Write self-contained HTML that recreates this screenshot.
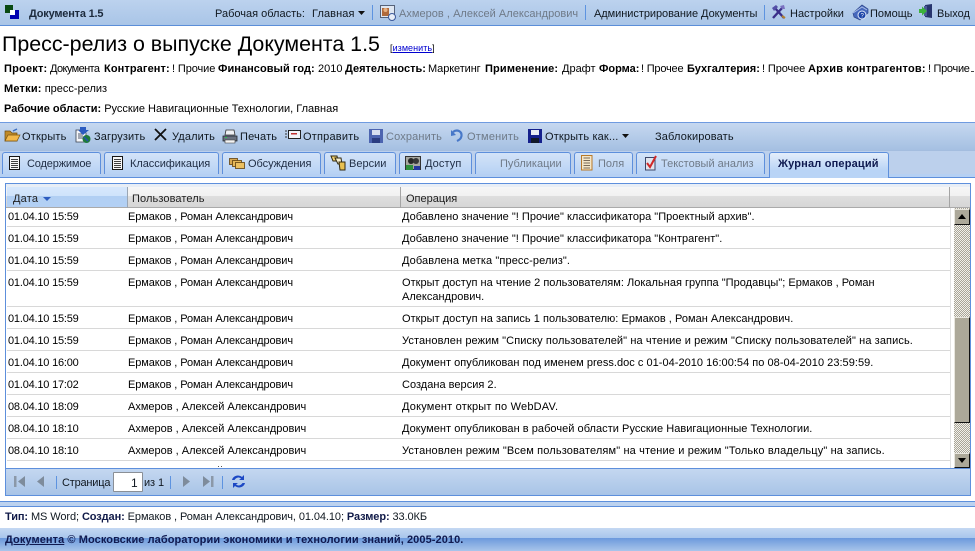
<!DOCTYPE html>
<html lang="ru"><head><meta charset="utf-8"><title>Документа</title>
<style>
html,body{margin:0;padding:0;background:#fff}
#p{position:relative;width:975px;height:551px;overflow:hidden;background:#fff;font:11px/13px "Liberation Sans",sans-serif;color:#000}
.a{position:absolute}
.t{position:absolute;white-space:nowrap;line-height:13px}
svg{position:absolute;overflow:visible}
.tab{position:absolute;top:152px;height:22px;box-sizing:border-box;border:1px solid #5d8fdc;border-bottom:none;border-radius:3px 3px 0 0;background:linear-gradient(#d3e3f8,#b7d2f4)}
.g{color:#6f7a88}
.tabt{color:#1f2d44}
.sep{position:absolute;width:1px;background:#5d93e0}
.hl{position:absolute;left:7px;width:943px;height:1px;background:#d8d8d8}
.d{left:8px;letter-spacing:-.2px}
.e{left:128px;letter-spacing:-.1px}
.h{left:128px}
.o{left:402px;letter-spacing:.02px}
.m{top:63px}
</style></head><body><div id="p">

<!-- top header -->
<div class="a" style="left:0;top:0;width:975px;height:25px;background:linear-gradient(#bcd2ee,#a9c5e7)"></div>
<div class="a" style="left:0;top:25px;width:975px;height:1px;background:#5b8ed8"></div>
<svg style="left:5px;top:5px" width="15" height="15"><rect x="0" y="0" width="8" height="8" fill="#0a4a12"/><rect x="5" y="5" width="9" height="9" fill="#0000b0"/><rect x="5" y="5" width="5" height="5" fill="#fff"/></svg>
<div class="t" style="left:29px;top:8px;font-weight:bold;color:#1c2a3c;letter-spacing:-.2px">Документа 1.5</div>
<div class="t" style="left:215px;top:8px;color:#101820">Рабочая область:</div>
<div class="t" style="left:312px;top:8px;color:#101820;letter-spacing:.1px">Главная</div>
<svg style="left:358px;top:11px" width="7" height="4"><path d="M0 0H7L3.5 4Z" fill="#111"/></svg>
<div class="sep" style="left:372px;top:5px;height:15px"></div>
<svg style="left:380px;top:5px" width="17" height="16"><rect x=".5" y=".5" width="14" height="12" fill="#dfe7f2" stroke="#56627a"/><rect x="2" y="3" width="7" height="8" fill="#b06a3c"/><circle cx="5.5" cy="5" r="2" fill="#e8b080"/><circle cx="12" cy="12" r="3.5" fill="#e8eef8" stroke="#3c5a9c"/></svg>
<div class="t g" style="left:399px;top:8px;letter-spacing:.03px">Ахмеров , Алексей Александрович</div>
<div class="sep" style="left:585px;top:5px;height:15px"></div>
<div class="t" style="left:594px;top:8px;color:#101820;letter-spacing:-.05px">Администрирование Документы</div>
<div class="sep" style="left:764px;top:5px;height:15px"></div>
<svg style="left:771px;top:4px" width="15" height="16"><path d="M2 14L12 3M3 3L13 14" stroke="#3b2f8a" stroke-width="2.4"/><path d="M1 4L5 1L7 3L3 7Z" fill="#5450a8"/><path d="M9 2L13 1L14 5L11 5Z" fill="#7a70c0"/><path d="M11 12L14 14" stroke="#b08030" stroke-width="2"/></svg>
<div class="t" style="left:790px;top:8px;color:#101820">Настройки</div>
<svg style="left:852px;top:4px" width="17" height="17"><path d="M1 9L10 1L16 5L16 9L8 16L2 13Z" fill="#4668bc" stroke="#2a4288" stroke-width=".7"/><path d="M1 9L10 3L15 6" stroke="#a8bce8" fill="none"/><circle cx="10" cy="11" r="4" fill="#1c44a8" stroke="#dfe8fa"/><text x="8.5" y="13.5" font-size="6" fill="#fff" font-family="Liberation Sans,sans-serif">?</text></svg>
<div class="t" style="left:870px;top:8px;color:#101820">Помощь</div>
<svg style="left:919px;top:4px" width="15" height="15"><path d="M6 1L13 0V14L6 13Z" fill="#27356e"/><rect x="5" y="2" width="3" height="10" fill="#4a5a98"/><path d="M0 5H3V2.5L8 7L3 11.500V9H0Z" fill="#3cb23c"/></svg>
<div class="t" style="left:937px;top:8px;color:#101820">Выход</div>

<!-- title + metadata -->
<div class="t" style="left:2px;top:31px;font-size:21.4px;line-height:26px;color:#000">Пресс-релиз о выпуске Документа 1.5</div>
<div class="t" style="left:390px;top:43px;font-size:9px;line-height:11px;letter-spacing:.05px">[<span style="color:#0000d0;text-decoration:underline">изменить</span>]</div>
<b class="t m" style="left:4px;letter-spacing:.2px">Проект:</b><span class="t m" style="left:50px;letter-spacing:-.6px">Документа</span>
<b class="t m" style="left:104px;letter-spacing:.1px">Контрагент:</b><span class="t m" style="left:172px;letter-spacing:-.1px">! Прочие</span>
<b class="t m" style="left:218px;letter-spacing:.05px">Финансовый год:</b><span class="t m" style="left:318px">2010</span>
<b class="t m" style="left:345px">Деятельность:</b><span class="t m" style="left:428px;letter-spacing:-.1px">Маркетинг</span>
<b class="t m" style="left:485px;letter-spacing:.15px">Применение:</b><span class="t m" style="left:562px">Драфт</span>
<b class="t m" style="left:599px">Форма:</b><span class="t m" style="left:641px;letter-spacing:-.2px">! Прочее</span>
<b class="t m" style="left:687px">Бухгалтерия:</b><span class="t m" style="left:762px;letter-spacing:-.1px">! Прочее</span>
<b class="t m" style="left:808px;letter-spacing:.2px">Архив контрагентов:</b><span class="t m" style="left:928px;letter-spacing:-.3px">! Прочие</span>
<div class="a" style="left:971px;top:71px;width:3px;height:1px;background:#444"></div>
<div class="t" style="left:4px;top:83px"><b style="letter-spacing:.2px">Метки:</b> пресс-релиз</div>
<div class="t" style="left:4px;top:103px"><b>Рабочие области:</b> Русские Навигационные Технологии, Главная</div>

<!-- toolbar -->
<div class="a" style="left:0;top:122px;width:975px;height:1px;background:#6f9be0"></div>
<div class="a" style="left:0;top:123px;width:975px;height:27px;background:linear-gradient(#c6d8f0,#a5c0e2)"></div>
<svg style="left:4px;top:128px" width="17" height="15"><path d="M1 13V3H6L8 5H13V13Z" fill="#c08a28" stroke="#6a4a10" stroke-width=".7"/><path d="M1 13L4 7H16L13 13Z" fill="#f2b84a" stroke="#7a5410" stroke-width=".7"/><path d="M9 3L13 1" stroke="#3c6ec0" stroke-width="1.500"/></svg>
<div class="t" style="left:22px;top:131px;color:#101820;letter-spacing:.2px">Открыть</div>
<svg style="left:75px;top:127px" width="17" height="17"><path d="M1 3H8L11 6V15H1Z" fill="#f4f6fa" stroke="#38404e" stroke-width=".8"/><path d="M3 7H8M3 9H8M3 11H8" stroke="#50586a"/><path d="M5 0H11V3H14L8 8L3 3H5Z" fill="#2c5cc0"/><circle cx="11.500" cy="12" r="4" fill="#1e7a3c"/><path d="M9 10L13 14" stroke="#2450b0" stroke-width="1.500"/></svg>
<div class="t" style="left:94px;top:131px;color:#101820;letter-spacing:.12px">Загрузить</div>
<svg style="left:154px;top:128px" width="13" height="13"><path d="M1 1L12 12M12 1L1 12" stroke="#111" stroke-width="1.800"/></svg>
<div class="t" style="left:172px;top:131px;color:#101820;letter-spacing:.15px">Удалить</div>
<svg style="left:222px;top:129px" width="16" height="15"><path d="M4 1H12L13 6H3Z" fill="#eef0f4" stroke="#333" stroke-width=".8"/><path d="M1 7H15V12H1Z" fill="#6a7280" stroke="#22262e" stroke-width=".8"/><path d="M3 11H13V14H3Z" fill="#f4f4f4" stroke="#333" stroke-width=".6"/><rect x="3" y="8" width="2" height="1" fill="#30c050"/></svg>
<div class="t" style="left:240px;top:131px;color:#101820;letter-spacing:.2px">Печать</div>
<svg style="left:285px;top:130px" width="17" height="11"><path d="M0 1H2M0 4H2M0 7H2" stroke="#333"/><rect x="3.500" y=".5" width="12" height="8" fill="#f2f4f8" stroke="#222"/><rect x="6" y="3" width="6" height="1.500" fill="#c03030"/></svg>
<div class="t" style="left:303px;top:131px;color:#101820;letter-spacing:.2px">Отправить</div>
<svg style="left:369px;top:129px" width="14" height="14"><rect width="14" height="14" fill="#4c64b0"/><rect x="3" y="1" width="8" height="5" fill="#d6def0"/><rect x="3" y="9" width="8" height="5" fill="#2a3c80"/></svg>
<div class="t g" style="left:386px;top:131px;letter-spacing:.15px">Сохранить</div>
<svg style="left:450px;top:129px" width="13" height="13"><path d="M3 3C7 0 12 2 11.500 7C11 10 9 11 7 12" fill="none" stroke="#4878c8" stroke-width="2.200"/><path d="M1 1L1 7L6 6Z" fill="#4878c8"/></svg>
<div class="t g" style="left:467px;top:131px;letter-spacing:.22px">Отменить</div>
<svg style="left:528px;top:129px" width="14" height="14"><rect width="14" height="14" fill="#14208c"/><rect x="3" y="1" width="8" height="5" fill="#e8ecf4"/><rect x="3" y="9" width="8" height="5" fill="#101828"/></svg>
<div class="t" style="left:545px;top:131px;color:#101820;letter-spacing:.15px">Открыть как...</div>
<svg style="left:622px;top:134px" width="7" height="4"><path d="M0 0H7L3.500 4Z" fill="#111"/></svg>
<div class="t" style="left:655px;top:131px;color:#101820;letter-spacing:.15px">Заблокировать</div>

<!-- tab strip -->
<div class="a" style="left:0;top:150px;width:975px;height:26px;background:#bcd0ec"></div>
<div class="a" style="left:0;top:150px;width:975px;height:1px;background:#a4bddf"></div>
<div class="a" style="left:0;top:174px;width:975px;height:3px;background:#b5d0f3"></div>
<div class="a" style="left:0;top:177px;width:975px;height:1px;background:#5d8fdc"></div>

<div class="tab" style="left:2px;width:99px"></div>
<div class="tab" style="left:104px;width:115px"></div>
<div class="tab" style="left:222px;width:99px"></div>
<div class="tab" style="left:324px;width:72px"></div>
<div class="tab" style="left:399px;width:73px"></div>
<div class="tab" style="left:475px;width:96px"></div>
<div class="tab" style="left:574px;width:59px"></div>
<div class="tab" style="left:636px;width:129px"></div>
<div class="tab" style="left:769px;width:120px;height:26px;background:linear-gradient(#e4eefb,#b9d4f6 70%)"></div>

<svg style="left:9px;top:156px" width="11" height="14"><path d="M.5.5H10.500V13.500H.5Z" fill="#f8f8f8" stroke="#151515"/><path d="M2 3.500H9M2 5.500H9M2 7.500H9M2 9.500H9M2 11.500H9" stroke="#404040"/></svg>
<div class="t tabt" style="left:27px;top:158px;letter-spacing:-.15px">Содержимое</div>
<svg style="left:112px;top:156px" width="11" height="14"><path d="M.5.5H10.500V13.500H.5Z" fill="#f8f8f8" stroke="#151515"/><path d="M2 3.500H9M2 5.500H9M2 7.500H9M2 9.500H9M2 11.500H9" stroke="#404040"/></svg>
<div class="t tabt" style="left:130px;top:158px;letter-spacing:-.05px">Классификация</div>
<svg style="left:229px;top:158px" width="16" height="11"><rect x=".5" y=".5" width="8" height="6" fill="#d8a850" stroke="#604010" stroke-width=".8"/><rect x="3.500" y="2.500" width="9" height="6" fill="#e6b858" stroke="#604010" stroke-width=".8"/><rect x="6.500" y="4.500" width="9" height="6" fill="#ecc060" stroke="#604010" stroke-width=".8"/></svg>
<div class="t tabt" style="left:248px;top:158px;letter-spacing:-.05px">Обсуждения</div>
<svg style="left:330px;top:155px" width="17" height="16"><path d="M1 1H7L8 6H3Z" fill="#f0d070" stroke="#302810"/><path d="M5 3H11L12 9H8Z" fill="#f8f0d0" stroke="#302810"/><path d="M9 7H15V15H10Z" fill="#e8c050" stroke="#302810"/></svg>
<div class="t tabt" style="left:349px;top:158px">Версии</div>
<svg style="left:405px;top:155px" width="16" height="16"><rect x=".5" y="1.500" width="15" height="13" fill="#a8a8a0" stroke="#333"/><circle cx="6" cy="6" r="3" fill="#282828"/><circle cx="11" cy="6" r="3" fill="#383838"/><rect x="1" y="10" width="7" height="5" fill="#30903c"/><rect x="9" y="11" width="6" height="4" fill="#2438a0"/></svg>
<div class="t tabt" style="left:425px;top:158px;letter-spacing:.1px">Доступ</div>
<div class="t g" style="left:500px;top:158px">Публикации</div>
<svg style="left:581px;top:155px" width="12" height="16"><path d="M.5.5H11V15H.5Z" fill="#f4e6c8" stroke="#b87828"/><path d="M2.500 3H9M2.500 5.500H9M2.500 8H9M2.500 10.500H9M2.500 13H9" stroke="#7a6a58"/></svg>
<div class="t g" style="left:598px;top:158px">Поля</div>
<svg style="left:645px;top:155px" width="12" height="16"><path d="M.5 2.500H10V15H.5Z" fill="#e0e4ee" stroke="#3c4668"/><path d="M2 8L5 12L11 1" fill="none" stroke="#d02828" stroke-width="2"/></svg>
<div class="t g" style="left:661px;top:158px">Текстовый анализ</div>
<div class="t" style="left:778px;top:158px;font-weight:bold;color:#0f1a50;letter-spacing:.18px">Журнал операций</div>

<!-- grid panel -->
<div class="a" style="left:5px;top:183px;width:966px;height:313px;box-sizing:border-box;border:1px solid #5d8fdc;background:#fff"></div>
<div class="a" style="left:6px;top:184px;width:964px;height:3px;background:#e8eef6"></div>
<div class="a" style="left:6px;top:187px;width:964px;height:21px;background:linear-gradient(#f6f6f6 0,#f1f1f1 45%,#dedede 46%,#d6d6d6 100%);border-bottom:1px solid #aaa;box-sizing:border-box"></div>
<div class="a" style="left:7px;top:187px;width:120px;height:21px;background:linear-gradient(#d7e8fc 0,#cfe3fb 45%,#b1cff3 46%,#b3d0f4 100%);border-bottom:1px solid #aaa;box-sizing:border-box"></div>
<div class="a" style="left:127px;top:187px;width:1px;height:21px;background:#9aa6b4"></div>
<div class="a" style="left:400px;top:187px;width:1px;height:21px;background:#a4a4a4"></div>
<div class="a" style="left:949px;top:187px;width:1px;height:21px;background:#a4a4a4"></div>
<div class="t" style="left:13px;top:193px;color:#222;letter-spacing:.2px">Дата</div>
<svg style="left:43px;top:197px" width="8" height="4"><path d="M0 0H8L4 4Z" fill="#2c5cc0"/></svg>
<div class="t" style="left:132px;top:193px;color:#222;letter-spacing:.1px">Пользователь</div>
<div class="t" style="left:406px;top:193px;color:#222">Операция</div>

<!-- row lines -->
<div class="hl" style="top:226px"></div>
<div class="hl" style="top:248px"></div>
<div class="hl" style="top:270px"></div>
<div class="hl" style="top:306px"></div>
<div class="hl" style="top:328px"></div>
<div class="hl" style="top:350px"></div>
<div class="hl" style="top:372px"></div>
<div class="hl" style="top:394px"></div>
<div class="hl" style="top:416px"></div>
<div class="hl" style="top:438px"></div>
<div class="hl" style="top:460px"></div>
<div class="a" style="left:950px;top:208px;width:1px;height:260px;background:#e2e2e2"></div>

<!-- rows -->
<div class="t d" style="top:211px">01.04.10 15:59</div><div class="t e" style="top:211px">Ермаков , Роман Александрович</div><div class="t o" style="top:211px">Добавлено значение "! Прочие" классификатора "Проектный архив".</div>
<div class="t d" style="top:233px">01.04.10 15:59</div><div class="t e" style="top:233px">Ермаков , Роман Александрович</div><div class="t o" style="top:233px">Добавлено значение "! Прочие" классификатора "Контрагент".</div>
<div class="t d" style="top:255px">01.04.10 15:59</div><div class="t e" style="top:255px">Ермаков , Роман Александрович</div><div class="t o" style="top:255px;letter-spacing:.1px">Добавлена метка "пресс-релиз".</div>
<div class="t d" style="top:277px">01.04.10 15:59</div><div class="t e" style="top:277px">Ермаков , Роман Александрович</div><div class="t o" style="top:277px">Открыт доступ на чтение 2 пользователям: Локальная группа "Продавцы"; Ермаков , Роман</div><div class="t o" style="top:291px">Александрович.</div>
<div class="t d" style="top:313px">01.04.10 15:59</div><div class="t e" style="top:313px">Ермаков , Роман Александрович</div><div class="t o" style="top:313px;letter-spacing:.03px">Открыт доступ на запись 1 пользователю: Ермаков , Роман Александрович.</div>
<div class="t d" style="top:335px">01.04.10 15:59</div><div class="t e" style="top:335px">Ермаков , Роман Александрович</div><div class="t o" style="top:335px;letter-spacing:.1px">Установлен режим "Списку пользователей" на чтение и режим "Списку пользователей" на запись.</div>
<div class="t d" style="top:357px">01.04.10 16:00</div><div class="t e" style="top:357px">Ермаков , Роман Александрович</div><div class="t o" style="top:357px;letter-spacing:.03px">Документ опубликован под именем press.doc с 01-04-2010 16:00:54 по 08-04-2010 23:59:59.</div>
<div class="t d" style="top:379px">01.04.10 17:02</div><div class="t e" style="top:379px">Ермаков , Роман Александрович</div><div class="t o" style="top:379px">Создана версия 2.</div>
<div class="t d" style="top:401px">08.04.10 18:09</div><div class="t h" style="top:401px">Ахмеров , Алексей Александрович</div><div class="t o" style="top:401px;letter-spacing:.2px">Документ открыт по WebDAV.</div>
<div class="t d" style="top:423px">08.04.10 18:10</div><div class="t h" style="top:423px">Ахмеров , Алексей Александрович</div><div class="t o" style="top:423px;letter-spacing:.04px">Документ опубликован в рабочей области Русские Навигационные Технологии.</div>
<div class="t d" style="top:445px">08.04.10 18:10</div><div class="t h" style="top:445px">Ахмеров , Алексей Александрович</div><div class="t o" style="top:445px;letter-spacing:.14px">Установлен режим "Всем пользователям" на чтение и режим "Только владельцу" на запись.</div>
<div class="a" style="left:218px;top:466px;width:1px;height:1px;background:#555"></div><div class="a" style="left:221px;top:466px;width:1px;height:1px;background:#555"></div>

<!-- scrollbar -->
<div class="a" style="left:954px;top:208px;width:16px;height:260px;background-color:#d9d6ce;background-image:repeating-conic-gradient(#a8a598 0 25%,#f2f0ea 0 50%);background-size:2px 2px"></div>
<div class="a" style="left:954px;top:209px;width:16px;height:16px;box-sizing:border-box;background:#aca899;border:1px solid;border-color:#e8e6de #111 #111 #e8e6de"></div>
<svg style="left:958px;top:214px" width="8" height="5"><path d="M0 5H8L4 0Z" fill="#000"/></svg>
<div class="a" style="left:954px;top:317px;width:16px;height:106px;box-sizing:border-box;background:#aca899;border:1px solid;border-color:#e8e6de #111 #111 #e8e6de"></div>
<div class="a" style="left:954px;top:453px;width:16px;height:15px;box-sizing:border-box;background:#aca899;border:1px solid;border-color:#e8e6de #111 #111 #e8e6de"></div>
<svg style="left:958px;top:458px" width="8" height="5"><path d="M0 0H8L4 5Z" fill="#000"/></svg>

<!-- pager -->
<div class="a" style="left:6px;top:468px;width:964px;height:1px;background:#5d8fdc"></div>
<div class="a" style="left:6px;top:469px;width:964px;height:26px;background:linear-gradient(#c4d7f0,#a8c4e7)"></div>
<svg style="left:14px;top:476px" width="11" height="12"><rect width="2.500" height="11" x="0" fill="#8b98a8"/><path d="M11 0V11L4 5.500Z" fill="#7e8c9c"/></svg>
<svg style="left:37px;top:476px" width="8" height="12"><path d="M7 0V11L0 5.500Z" fill="#7e8c9c"/></svg>
<div class="sep" style="left:56px;top:476px;height:13px"></div>
<div class="t" style="left:62px;top:477px;color:#101820;letter-spacing:-.2px">Страница</div>
<div class="a" style="left:113px;top:472px;width:30px;height:20px;box-sizing:border-box;border:1px solid #8a8f96;background:#fff;border-radius:1px"></div>
<div class="t" style="left:131px;top:477px;color:#101820;font-size:12px">1</div>
<div class="t" style="left:144px;top:477px;color:#101820;letter-spacing:-.1px">из 1</div>
<div class="sep" style="left:170px;top:476px;height:13px"></div>
<svg style="left:183px;top:476px" width="8" height="12"><path d="M0 0V11L7 5.500Z" fill="#7e8c9c"/></svg>
<svg style="left:203px;top:476px" width="11" height="12"><path d="M0 0V11L7 5.500Z" fill="#7e8c9c"/><rect width="2.500" height="11" x="8" fill="#8b98a8"/></svg>
<div class="sep" style="left:222px;top:476px;height:13px"></div>
<svg style="left:231px;top:474px" width="15" height="15"><path d="M1 6C2 2 7 0 11 3L13 1V6H8L10 4.500C7 2.500 5 4 3.500 6Z" fill="#1c48c4"/><path d="M14 9C13 13 8 15 4 12L2 14V9H7L5 10.500C8 12.500 10 11 11.500 9Z" fill="#1c48c4"/></svg>

<!-- bottom band -->
<div class="a" style="left:0;top:501px;width:975px;height:1px;background:#5d8fdc"></div>
<div class="a" style="left:0;top:502px;width:975px;height:4px;background:#bcd2ef"></div>
<div class="a" style="left:0;top:506px;width:975px;height:1px;background:#5d8fdc"></div>
<div class="t" style="left:5px;top:511px;color:#101820;letter-spacing:-.09px"><b style="color:#101a48">Тип:</b> MS Word; <b style="color:#101a48">Создан:</b> Ермаков , Роман Александрович, 01.04.10; <b style="color:#101a48">Размер:</b> 33.0КБ</div>

<!-- footer -->
<div class="a" style="left:0;top:528px;width:975px;height:10px;background:linear-gradient(#c4d8f2,#a8c6ec)"></div>
<div class="a" style="left:0;top:538px;width:975px;height:13px;background:linear-gradient(#6b99dc,#a8c5ea)"></div>
<div class="t" style="left:5px;top:534px;font-weight:bold;color:#101a50;letter-spacing:.08px"><span style="text-decoration:underline">Документа</span> © Московские лаборатории экономики и технологии знаний, 2005-2010.</div>

</div></body></html>
